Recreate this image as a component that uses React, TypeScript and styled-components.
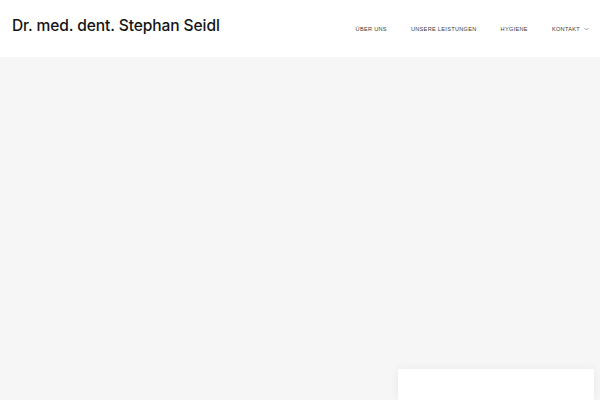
import React from "react";
import styled, { createGlobalStyle } from "styled-components";

const Global = createGlobalStyle`
  html, body { margin: 0; padding: 0; }
  body { background: #f6f6f6; font-family: "Inter", "Noto Sans", sans-serif; }
`;

const Page = styled.div`
  width: 600px;
  height: 400px;
  display: flex;
  flex-direction: column;
  overflow: hidden;
`;

const Header = styled.header`
  height: 57px;
  flex: none;
  background: #ffffff;
  display: flex;
  align-items: center;
  justify-content: space-between;
  padding: 0 11px 0 12px;
  box-sizing: border-box;
`;

const Brand = styled.div`
  font-family: "Inter", "Noto Sans", sans-serif;
  font-size: 15.55px;
  font-weight: 500;
  color: #151515;
  letter-spacing: -0.1px;
  margin-top: -7px;
`;

const Nav = styled.nav`
  display: flex;
  align-items: center;
  gap: 24px;
`;

const NavItem = styled.a`
  font-family: "Liberation Sans", "Noto Sans", sans-serif;
  font-size: 5.6px;
  letter-spacing: 0.3px;
  text-transform: uppercase;
  color: #3a3a3a;
  text-decoration: none;
  display: flex;
  align-items: center;
  gap: 4px;
`;

const Main = styled.main`
  flex: 1;
  background: #f6f6f6;
  display: flex;
  justify-content: flex-end;
  align-items: flex-end;
  padding-right: 6px;
`;

const Card = styled.div`
  width: 196px;
  height: 31px;
  background: #ffffff;
  box-shadow: 0 0 10px rgba(0, 0, 0, 0.06);
`;

const Chevron = () => (
  <svg width="5" height="4" viewBox="0 0 5 4">
    <path d="M0.5 1 L2.5 3 L4.5 1" fill="none" stroke="#777" strokeWidth="0.7" />
  </svg>
);

export default function App() {
  return (
    <>
      <Global />
      <Page>
        <Header>
          <Brand>Dr. med. dent. Stephan Seidl</Brand>
          <Nav>
            <NavItem href="#">Über uns</NavItem>
            <NavItem href="#">Unsere Leistungen</NavItem>
            <NavItem href="#">Hygiene</NavItem>
            <NavItem href="#">
              Kontakt <Chevron />
            </NavItem>
          </Nav>
        </Header>
        <Main>
          <Card />
        </Main>
      </Page>
    </>
  );
}
